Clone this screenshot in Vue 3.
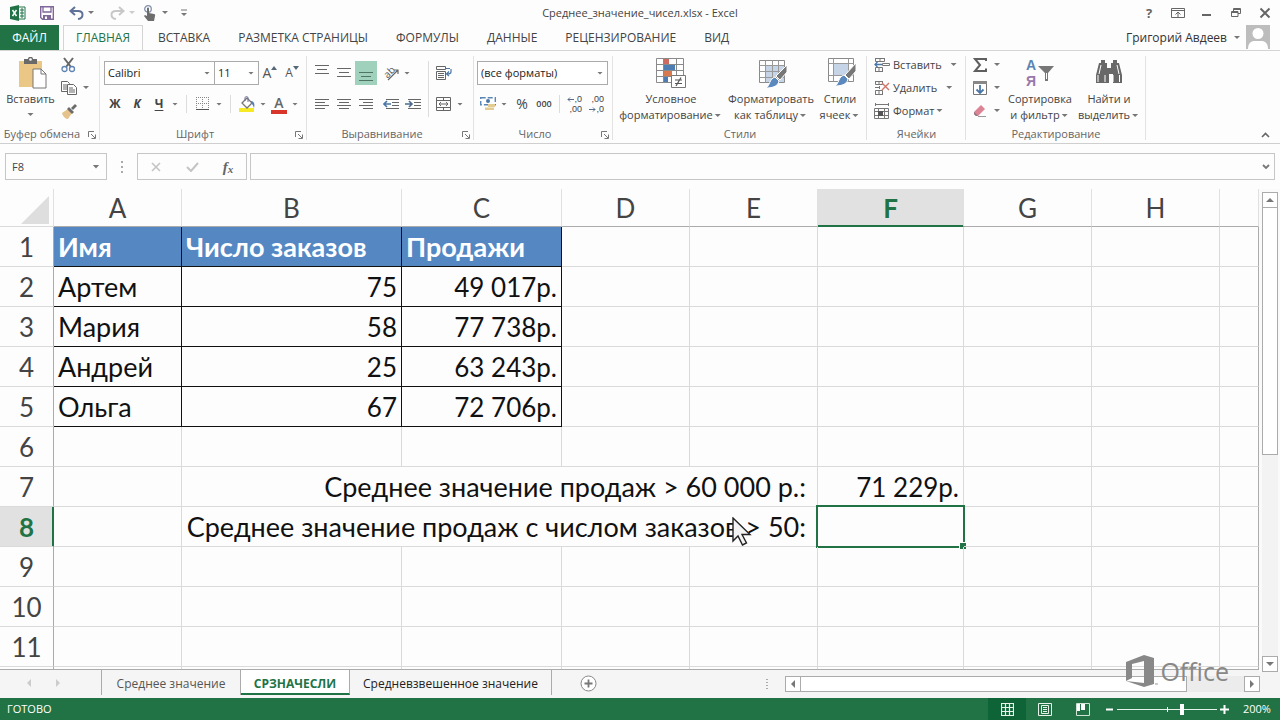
<script setup>
import { ref } from 'vue'

const menu = ['ВСТАВКА', 'РАЗМЕТКА СТРАНИЦЫ', 'ФОРМУЛЫ', 'ДАННЫЕ', 'РЕЦЕНЗИРОВАНИЕ', 'ВИД']
const columns = ['A', 'B', 'C', 'D', 'E', 'F', 'G', 'H']
const people = [
  { row: 2, name: 'Артем', orders: '75', sales: '49 017р.' },
  { row: 3, name: 'Мария', orders: '58', sales: '77 738р.' },
  { row: 4, name: 'Андрей', orders: '25', sales: '63 243р.' },
  { row: 5, name: 'Ольга', orders: '67', sales: '72 706р.' }
]
const totals = [
  { row: 7, label: 'Среднее значение продаж > 60 000 р.:', value: '71 229р.' },
  { row: 8, label: 'Среднее значение продаж с числом заказов > 50:', value: '' }
]
const zoom = ref(66)
const formula = ref('')
</script>

<template>
  <div class="app">
    <header class="titlebar">
      <div class="quick">
        <svg class="q-logo" width="16" height="16" viewBox="0 0 16 16"><path d="M9 2h6v12H9" fill="#fff" stroke="#217346" /><path d="M10 5h4M10 8h4M10 11h4M12 3v10" stroke="#217346" fill="none" /><path d="M0 2l9-2v16l-9-2z" fill="#217346" /><path d="M2.500 5l4 6M6.500 5l-4 6" stroke="#fff" stroke-width="1.500" /></svg>
        <button aria-label="Сохранить"><svg width="14" height="14" viewBox="0 0 14 14"><path d="M.7.7h12.600v12.600H2.500L.7 11.500z" fill="#fff" stroke="#80679a" stroke-width="1.400" /><path d="M3 1v5h8V1" fill="none" stroke="#80679a" stroke-width="1.300" /><path d="M3 9h8v4H3z" fill="#80679a" /><path d="M5 10.500h2V13H5z" fill="#fff" /></svg></button>
        <button aria-label="Отменить"><svg width="15" height="14" viewBox="0 0 15 14"><path d="M6 1L1.500 5 6 9M2 5h7c6 0 6 7 0 8" fill="none" stroke="#5f7297" stroke-width="2" /></svg></button>
        <i class="arr"></i>
        <button aria-label="Вернуть"><svg width="15" height="14" viewBox="0 0 15 14"><path d="M9 1l4.500 4L9 9M13 5H6c-6 0-6 7 0 8" fill="none" stroke="#c8c8c8" stroke-width="2" /></svg></button>
        <i class="arr pale"></i>
        <button class="touch" aria-label="Режим касания"><svg width="14" height="16" viewBox="0 0 14 16"><circle cx="5" cy="4" r="3.300" fill="none" stroke="#8491ad" stroke-width="1.300" /><path d="M4 3.500c0-1.500 2-1.500 2 0V8l5 1c1 0 1.500 1 1 2l-1 5H5L1 11l1-1 2 1z" fill="#6d6d6d" /></svg></button>
        <i class="arr"></i>
        <svg class="q-more" width="8" height="8" viewBox="0 0 8 8"><path d="M1 1h6" stroke="#777" /><path d="M1 4h6L4 7z" fill="#777" /></svg>
      </div>
      <div class="title">Среднее_значение_чисел.xlsx - Excel</div>
      <div class="window">
        <button class="help" aria-label="Справка">?</button>
        <button aria-label="Параметры ленты"><svg width="14" height="12" viewBox="0 0 14 12"><path d="M.5 1.500h13v9H.5zM.5 3.500h13M7 10V5M4.500 7.500L7 5l2.500 2.500" fill="none" stroke="#666" /></svg></button>
        <button aria-label="Свернуть"><svg width="12" height="12" viewBox="0 0 12 12"><path d="M1 8h9" stroke="#666" stroke-width="2" /></svg></button>
        <button aria-label="Восстановить"><svg width="12" height="12" viewBox="0 0 12 12"><path d="M3.500 4V1.500h7v5H8M1.500 4.500h6.500v5H1.500zM1.500 5.500H8M3.500 2.500h7" fill="none" stroke="#666" /></svg></button>
        <button aria-label="Закрыть"><svg width="12" height="12" viewBox="0 0 12 12"><path d="M1.500 1.500l9 9M10.500 1.500l-9 9" stroke="#666" stroke-width="2" /></svg></button>
      </div>
    </header>

    <nav class="tabs">
      <button class="file">ФАЙЛ</button>
      <button class="tab current">ГЛАВНАЯ</button>
      <button v-for="m in menu" :key="m" class="tab">{{ m }}</button>
      <button class="user">Григорий Авдеев <i class="arr"></i></button>
      <svg class="avatar" width="24" height="24" viewBox="0 0 24 24"><path d="M0 0h24v24H0z" fill="#bdbdbd" /><circle cx="12" cy="8.500" r="5.500" fill="#fff" /><path d="M2 24c0-7 4-8 7-8h6c3 0 7 1 7 8z" fill="#fff" /></svg>
    </nav>

    <section class="ribbon">
      <div class="group g-clip">
        <div class="body">
          <button class="big paste">
            <svg width="32" height="32" viewBox="0 0 32 32"><path d="M4 4h23v26H4z" fill="#ebc785" /><path d="M9 2h4c0-3 5-3 5 0h4v5H9z" fill="#696969" /><circle cx="15.500" cy="2.500" r="1.300" fill="#fff" /><path d="M18 12h8l5 5v14H18z" fill="#fff" stroke="#777" /><path d="M26 12v5h5" fill="none" stroke="#777" /></svg>
            <span>Вставить</span><i class="arr"></i>
          </button>
          <div class="stack">
            <button aria-label="Вырезать"><svg width="16" height="16" viewBox="0 0 16 16"><path d="M3 1l7 9M12 1L5 10" stroke="#666" stroke-width="2" /><circle cx="3.500" cy="12" r="2.500" fill="none" stroke="#5e83b5" stroke-width="1.300" /><circle cx="11" cy="12" r="2.500" fill="none" stroke="#5e83b5" stroke-width="1.300" /></svg></button>
            <button aria-label="Копировать"><svg width="16" height="16" viewBox="0 0 16 16"><path d="M.5 1.500h6l2 2v8h-8z" fill="#fff" stroke="#666" /><path d="M2 5h4M2 7h4M2 9h4" stroke="#666" /><path d="M6.500 4.500h6l3 3v7h-9z" fill="#fff" stroke="#666" /><path d="M8 8h4M8 10h6M8 12h6" stroke="#666" /></svg><i class="arr"></i></button>
            <button aria-label="Формат по образцу"><svg width="16" height="16" viewBox="0 0 16 16"><path d="M1 10l6-4 4 4-4 6c-2 0-5-2-6-6z" fill="#e5c38b" /><path d="M6 6l2-2 5 5-2 2zM10 5l4-4 2 2-4 4z" fill="#6b6b6b" /></svg></button>
          </div>
        </div>
        <div class="caption">Буфер обмена<svg class="launch" width="8" height="8" viewBox="0 0 8 8"><path d="M.5 6V.5H6M3 3l4 4M7.500 3.500v4h-4" fill="none" stroke="#777" /></svg></div>
      </div>

      <div class="group g-font">
        <div class="body two">
          <div class="line">
            <label class="drop wide"><select aria-label="Шрифт"><option>Calibri</option></select><i class="arr"></i></label>
            <label class="drop small"><select aria-label="Размер шрифта"><option>11</option></select><i class="arr"></i></label>
            <button class="ic grow" aria-label="Увеличить шрифт">A<svg width="6" height="4" viewBox="0 0 6 4"><path d="M0 4h6L3 0z" fill="#567" /></svg></button>
            <button class="ic grow less" aria-label="Уменьшить шрифт">A<svg width="6" height="4" viewBox="0 0 6 4"><path d="M0 0h6L3 4z" fill="#567" /></svg></button>
          </div>
          <div class="line">
            <button class="ic b">Ж</button><button class="ic b it">К</button><button class="ic b un">Ч</button><i class="arr"></i>
            <i class="sep"></i>
            <button class="ic" aria-label="Границы"><svg width="14" height="14" viewBox="0 0 14 14"><path d="M.5 0v13M6.500 0v13M12.500 0v13M0 .5h13M0 6.500h13" stroke="#888" stroke-dasharray="1 1" /><path d="M0 12.500h13" stroke="#555" /></svg></button><i class="arr"></i>
            <i class="sep"></i>
            <button class="ic" aria-label="Цвет заливки"><svg width="17" height="17" viewBox="0 0 17 17"><path d="M0 12h15v4H0z" fill="#f6ea25" /><path d="M3 7l5-5 5 5-5 5z" fill="#fff" stroke="#777" stroke-width="1.300" /><path d="M6 5V2c0-2 3-2 3 0v4" fill="none" stroke="#6c6c9a" /><path d="M12 5c3 0 4 3 3 7-1-3-2-4-3-5z" fill="#5b7fb0" /></svg></button><i class="arr"></i>
            <button class="ic letter" aria-label="Цвет текста">А</button><i class="arr"></i>
          </div>
        </div>
        <div class="caption">Шрифт<svg class="launch" width="8" height="8" viewBox="0 0 8 8"><path d="M.5 6V.5H6M3 3l4 4M7.500 3.500v4h-4" fill="none" stroke="#777" /></svg></div>
      </div>

      <div class="group g-align">
        <div class="body sides">
          <div class="two">
            <div class="line">
              <button class="ic" aria-label="По верхнему краю"><svg width="14" height="18" viewBox="0 0 14 18"><path d="M0 1.500h14M2 5.500h10M0 9.500h14" stroke="#666" /></svg></button>
              <button class="ic" aria-label="По середине"><svg width="14" height="18" viewBox="0 0 14 18"><path d="M0 4.500h14M2 8.500h10M0 12.500h14" stroke="#666" /></svg></button>
              <button class="ic on" aria-label="По нижнему краю"><svg width="14" height="18" viewBox="0 0 14 18"><path d="M0 8.500h14M2 12.500h10M0 16.500h14" stroke="#4f7566" /></svg></button>
              <button class="ic gap" aria-label="Ориентация"><svg class="turn" width="18" height="18" viewBox="0 0 18 18"><text x="2" y="12" font-size="10" transform="rotate(-45 7 9)" fill="#555">ab</text><path d="M6 16L16 6M12 6h4v4" fill="none" stroke="#666" stroke-width="1.200" /></svg></button><i class="arr"></i>
            </div>
            <div class="line">
              <button class="ic" aria-label="По левому краю"><svg width="14" height="14" viewBox="0 0 14 14"><path d="M0 2.500h14M0 5.500h10M0 8.500h14M0 11.500h10" stroke="#666" /></svg></button>
              <button class="ic" aria-label="По центру"><svg width="14" height="14" viewBox="0 0 14 14"><path d="M0 2.500h14M2 5.500h10M0 8.500h14M2 11.500h10" stroke="#666" /></svg></button>
              <button class="ic" aria-label="По правому краю"><svg width="14" height="14" viewBox="0 0 14 14"><path d="M0 2.500h14M4 5.500h10M0 8.500h14M4 11.500h10" stroke="#666" /></svg></button>
              <button class="ic gap" aria-label="Уменьшить отступ"><svg width="16" height="14" viewBox="0 0 16 14"><path d="M3 2.500h13M9 5.500h7M9 8.500h7M3 11.500h13" stroke="#666" /><path d="M8 7H1M4 4L1 7l3 3" fill="none" stroke="#4a76a8" stroke-width="1.600" /></svg></button>
              <button class="ic" aria-label="Увеличить отступ"><svg width="16" height="14" viewBox="0 0 16 14"><path d="M3 2.500h13M9 5.500h7M9 8.500h7M3 11.500h13" stroke="#666" /><path d="M0 7h7M4 4l3 3-3 3" fill="none" stroke="#4a6a90" stroke-width="1.600" /></svg></button>
            </div>
          </div>
          <i class="sep tall"></i>
          <div class="two">
            <div class="line"><button class="ic" aria-label="Перенос текста"><svg width="16" height="16" viewBox="0 0 16 16"><path d="M.5 1.500h9v3h-9zM.5 6.500h9v8h-9zM2 8.500h6M2 10.500h6M2 12.500h6" fill="none" stroke="#666" /><path d="M10 3.500h4M15 4v3c0 2-3 2-4 2M13 6.500L10.500 9l2.500 2" fill="none" stroke="#4a76a8" stroke-width="1.200" /></svg></button></div>
            <div class="line"><button class="ic" aria-label="Объединить"><svg width="16" height="16" viewBox="0 0 16 16"><path d="M.5 1.500h14v13H.5zM.5 4.500h14M.5 11.500h14M7.500 1v3.500M7.500 11.500V15" fill="none" stroke="#666" /><path d="M3 8h9M5 6L3 8l2 2M10 6l2 2-2 2" fill="none" stroke="#666" /></svg></button><i class="arr"></i></div>
          </div>
        </div>
        <div class="caption">Выравнивание<svg class="launch" width="8" height="8" viewBox="0 0 8 8"><path d="M.5 6V.5H6M3 3l4 4M7.500 3.500v4h-4" fill="none" stroke="#777" /></svg></div>
      </div>

      <div class="group g-num">
        <div class="body two">
          <div class="line"><label class="drop full"><select aria-label="Числовой формат"><option>(все форматы)</option></select><i class="arr"></i></label></div>
          <div class="line">
            <button class="ic" aria-label="Финансовый формат"><svg width="17" height="16" viewBox="0 0 17 16"><path d="M.7 1.700h14.600v7H.7z" fill="#fff" stroke="#5b86b8" stroke-width="1.400" stroke-dasharray="5 2" /><circle cx="8" cy="5" r="2" fill="#4a76a8" /><path d="M8 8h7v3H8zM5 11.500h9V14H5z" fill="#e4cb91" /></svg></button><i class="arr"></i>
            <button class="ic pct">%</button><button class="ic zeros">000</button>
            <i class="sep slim"></i>
            <button class="ic dec" aria-label="Увеличить разрядность"><span><svg width="7" height="5" viewBox="0 0 7 5"><path d="M7 2.500H1M3 .5l-2 2 2 2" fill="none" stroke="#5a6e8c" /></svg>,0</span><span>,00</span></button>
            <button class="ic dec" aria-label="Уменьшить разрядность"><span>,00</span><span><svg width="7" height="5" viewBox="0 0 7 5"><path d="M0 2.500h6M4 .5l2 2-2 2" fill="none" stroke="#5a6e8c" /></svg>,0</span></button>
          </div>
        </div>
        <div class="caption">Число<svg class="launch" width="8" height="8" viewBox="0 0 8 8"><path d="M.5 6V.5H6M3 3l4 4M7.500 3.500v4h-4" fill="none" stroke="#777" /></svg></div>
      </div>

      <div class="group g-style">
        <div class="body">
          <button class="big w1">
            <svg width="32" height="32" viewBox="0 0 32 32"><path d="M1.500 1.500h27v24h-27zM1.500 7.500h27M1.500 13.500h27M1.500 19.500h27M8.500 1.500v24M21.500 1.500v24" fill="#fff" stroke="#8a8a8a" /><path d="M9 2h5v5H9z" fill="#ce6a62" /><path d="M9 8h11v5H9z" fill="#4e7db4" /><path d="M9 14h8v5H9z" fill="#d77a4f" /><path d="M9 20h4v5H9z" fill="#4e7db4" /><path d="M16.500 18.500h14v12h-14z" fill="#fff" stroke="#777" /><path d="M20 23h7M20 26.500h7M26 20.500l-5 8.500" stroke="#555" stroke-width="1.200" /></svg>
            <span>Условное</span><span>форматирование<i class="arr"></i></span>
          </button>
          <button class="big w2">
            <svg width="32" height="32" viewBox="0 0 32 32"><path d="M4.500 3.500h25v22h-25z" fill="#fff" stroke="#8a8a8a" /><path d="M11 9h18v16H11z" fill="#c5d4e6" /><path d="M4.500 8.500h25M4.500 14.500h25M4.500 20.500h25M10.500 3.500v22M17.500 3.500v22M23.500 3.500v22" stroke="#999" /><path d="M32 8v7l-7 8-4-4z" fill="#777" stroke="#fff" /><path d="M20 20l4 4c-1 6-8 7-13 7 4-2 3-9 9-11z" fill="#5b89bd" stroke="#fff" /></svg>
            <span>Форматировать</span><span>как таблицу<i class="arr"></i></span>
          </button>
          <button class="big w3">
            <svg width="32" height="32" viewBox="0 0 32 32"><path d="M4.500 1.500h25v23h-25z" fill="#fff" stroke="#8a8a8a" /><path d="M4.500 6.500h25M4.500 18.500h25M9.500 1.500v23M24.500 1.500v23" stroke="#999" /><path d="M10 7h14v11H10z" fill="#c5d4e6" /><path d="M32 6v8l-7 8-4-4z" fill="#777" stroke="#fff" /><path d="M20 18l4 4c-1 6-8 7-13 7 4-2 3-9 9-11z" fill="#5b89bd" stroke="#fff" /></svg>
            <span>Стили</span><span>ячеек<i class="arr"></i></span>
          </button>
        </div>
        <div class="caption">Стили</div>
      </div>

      <div class="group g-cells">
        <div class="body">
          <div class="stack">
            <button><svg width="16" height="16" viewBox="0 0 16 16"><path d="M1.500 1V4.500h9V1M1.500 1.500h9M6 1v3.500M1.500 15v-4.500h7V15M1.500 14.500h7M5 10.500v4M8.500 6.500h7v2h-7z" fill="none" stroke="#777" /><path d="M8 7.500H1M3.500 5L1 7.500 3.500 10" fill="none" stroke="#4a76a8" stroke-width="1.300" /></svg><span>Вставить</span><i class="arr far"></i></button>
            <button><svg width="16" height="16" viewBox="0 0 16 16"><path d="M1.500 1V4.500h7V1M1.500 1.500h7M5 1v3.500M1.500 15v-4.500h7V15M1.500 14.500h7M5 10.500v4M1 7.500h4M5.500 6v3" fill="none" stroke="#777" /><path d="M8 3l7 7M15 3l-7 7" stroke="#cf7566" stroke-width="1.400" /></svg><span>Удалить</span><i class="arr far"></i></button>
            <button><svg width="16" height="16" viewBox="0 0 16 16"><path d="M1.500 0v3M14.500 0v3M1.500 1.500h13" stroke="#777" /><path d="M.5 5.500h14v10H.5zM.5 8.500h14M.5 12.500h14M4.500 5v11M10.500 5v11" fill="none" stroke="#777" /><path d="M4 8h5v5H4z" fill="#555" /></svg><span>Формат</span><i class="arr"></i></button>
          </div>
        </div>
        <div class="caption">Ячейки</div>
      </div>

      <div class="group g-edit">
        <div class="body">
          <div class="stack">
            <button aria-label="Автосумма"><svg width="16" height="16" viewBox="0 0 16 16"><path d="M14 4V2H3l5 6-5 6h11v-2.500" fill="none" stroke="#5f5f5f" stroke-width="2" /></svg><i class="arr"></i></button>
            <button aria-label="Заполнить"><svg width="16" height="16" viewBox="0 0 16 16"><path d="M1.500 1.500h13v13h-13z" fill="#fff" stroke="#777" /><path d="M1 1h14v3H1z" fill="#888" /><path d="M8 5v8M4.500 9.500L8 13l3.500-3.500" fill="none" stroke="#4a76a8" stroke-width="1.800" /></svg><i class="arr"></i></button>
            <button aria-label="Очистить"><svg width="16" height="16" viewBox="0 0 16 16"><path d="M2 9l7-7 4 4-7 7H4l-2-2z" fill="#dc8394" /><path d="M2 9l4 4H4l-2-2z" fill="#8c7580" /><path d="M6 13.500h8" stroke="#999" /></svg><i class="arr"></i></button>
          </div>
          <button class="big w4">
            <span class="sort"><span><b>А</b><b class="ya">Я</b></span><svg width="16" height="17" viewBox="0 0 16 17"><path d="M0 1h16l-6 7v8H7V8z" fill="#777" /><path d="M8 8h1v6H8z" fill="#fff" /></svg></span>
            <span>Сортировка</span><span>и фильтр<i class="arr"></i></span>
          </button>
          <button class="big w5">
            <svg width="32" height="32" viewBox="0 0 32 32"><path d="M8 3h4v3h2v5h4V6h2V3h4v3h2l3 12v8h-9v-9h-4v9H3v-8L6 6h2z" fill="#686868" /><path d="M5 18v7M26.500 18v7M8 8L6 17M24 8l2 9M12 18v7M20 18v7" stroke="#fff" /></svg>
            <span>Найти и</span><span>выделить<i class="arr"></i></span>
          </button>
        </div>
        <div class="caption">Редактирование</div>
      </div>
      <button class="collapse" aria-label="Свернуть ленту"><svg width="9" height="6" viewBox="0 0 9 6"><path d="M1 5l3.500-3.500L8 5" fill="none" stroke="#666" stroke-width="1.600" /></svg></button>
    </section>

    <section class="formula">
      <label class="namebox"><select aria-label="Имя ячейки"><option>F8</option></select><i class="arr"></i></label>
      <svg class="dots" width="3" height="14" viewBox="0 0 3 14"><path d="M0 1h2v2H0zM0 6h2v2H0zM0 11h2v2H0z" fill="#aaa" /></svg>
      <div class="fx">
        <button aria-label="Отмена"><svg width="10" height="10" viewBox="0 0 10 10"><path d="M1 1l8 8M9 1L1 9" stroke="#c4c4c4" stroke-width="1.600" /></svg></button>
        <button aria-label="Ввод"><svg width="13" height="10" viewBox="0 0 13 10"><path d="M1 5l4 4 7-8" fill="none" stroke="#c4c4c4" stroke-width="2" /></svg></button>
        <button class="fn" aria-label="Вставить функцию"><i>f</i><i class="x">x</i></button>
      </div>
      <div class="entry"><input v-model="formula" aria-label="Строка формул" /><svg width="8" height="6" viewBox="0 0 8 6"><path d="M1 1l3 3 3-3" fill="none" stroke="#777" stroke-width="1.800" /></svg></div>
    </section>

    <main class="sheet">
      <div class="cells">
        <table>
          <colgroup><col class="c0" /><col v-for="c in columns" :key="c" :class="'c' + c" /><col /></colgroup>
          <thead>
            <tr><th class="corner"><svg width="28" height="28" viewBox="0 0 28 28"><path d="M28 0v28H0z" fill="#dedede" /></svg></th><th v-for="c in columns" :key="c" :class="{ active: c === 'F' }">{{ c }}</th><th></th></tr>
          </thead>
          <tbody>
            <tr class="head"><th>1</th><td>Имя</td><td>Число заказов</td><td>Продажи</td><td v-for="n in 6" :key="n" class="plain"></td></tr>
            <tr v-for="p in people" :key="p.row" class="data"><th>{{ p.row }}</th><td>{{ p.name }}</td><td class="num">{{ p.orders }}</td><td class="num">{{ p.sales }}</td><td v-for="n in 6" :key="n" class="plain"></td></tr>
            <tr><th>6</th><td v-for="n in 9" :key="n"></td></tr>
            <tr v-for="t in totals" :key="t.row"><th :class="{ active: t.row === 8 }">{{ t.row }}</th><td></td><td colspan="4" class="label">{{ t.label }}</td><td class="num" :class="{ selected: t.row === 8 }">{{ t.value }}</td><td v-for="n in 3" :key="n"></td></tr>
            <tr v-for="r in [9, 10, 11]" :key="r"><th>{{ r }}</th><td v-for="n in 9" :key="n"></td></tr>
            <tr><th></th><td v-for="n in 9" :key="n"></td></tr>
          </tbody>
        </table>
      </div>
      <div class="vscroll">
        <button aria-label="Вверх"><i class="tri up"></i></button>
        <div class="thumb"></div><div class="track"></div>
        <button aria-label="Вниз"><i class="tri down"></i></button>
      </div>
      <svg class="pointer" width="20" height="30" viewBox="0 0 20 30"><path d="M1 1v23l5-5 4.500 9 4-2-4.500-8.500h8z" fill="#f4f4f4" stroke="#222" stroke-width="1.400" /></svg>
    </main>

    <footer class="sheetbar">
      <div class="arrows"><i class="tri left"></i><i class="tri right"></i></div>
      <button class="stab first">Среднее значение</button>
      <button class="stab sel">СРЗНАЧЕСЛИ</button>
      <button class="stab dark">Средневзвешенное значение</button>
      <button class="add" aria-label="Новый лист"><svg width="17" height="17" viewBox="0 0 17 17"><circle cx="8.500" cy="8.500" r="7.500" fill="#fff" stroke="#888" /><path d="M8.500 4.500v8M4.500 8.500h8" stroke="#777" stroke-width="1.800" /></svg></button>
      <svg class="dots grip" width="3" height="14" viewBox="0 0 3 14"><path d="M0 2h2v1H0zM0 5h2v1H0zM0 8h2v1H0zM0 11h2v1H0z" fill="#aaa" /></svg>
      <div class="hscroll">
        <button aria-label="Влево"><i class="tri left"></i></button>
        <div class="thumb"></div><div class="track"></div>
        <button aria-label="Вправо"><i class="tri right"></i></button>
      </div>
      <div class="brand">
        <svg width="34" height="32" viewBox="0 0 34 32"><path d="M0 7L18 0l10 3v26l-10 3L0 26l18 2V6L6 9v14l-6 3z" fill="#888" /><path d="M29 29h3" stroke="#999" /></svg><span>Office</span>
      </div>
    </footer>

    <footer class="status">
      <span class="ready">ГОТОВО</span>
      <button class="view now" aria-label="Обычный"><svg width="13" height="13" viewBox="0 0 13 13"><path d="M.5.5h12v12H.5zM4.500.5v12M8.500.5v12M.5 4.500h12M.5 8.500h12" fill="none" stroke="#e6f2ea" stroke-width="1.200" /></svg></button>
      <button class="view" aria-label="Разметка страницы"><svg width="14" height="13" viewBox="0 0 14 13"><path d="M.5.5h13v12H.5zM3.500 2.500h7v8h-7zM5 4.500h4M5 6.500h4M5 8.500h4" fill="none" stroke="#e6f2ea" /></svg></button>
      <button class="view" aria-label="Страничный"><svg width="14" height="13" viewBox="0 0 14 13"><path d="M.5.5h13v12H.5z" fill="none" stroke="#cfe3d7" /><path d="M1 1h3v7H1zM5 1h4v6H5z" fill="#fff" /></svg></button>
      <button class="sign" aria-label="Уменьшить"><svg width="7" height="7" viewBox="0 0 7 7"><path d="M0 3.500h7" stroke="#fff" stroke-width="2" /></svg></button>
      <div class="slide"><input v-model="zoom" type="range" min="0" max="100" aria-label="Масштаб" /></div>
      <button class="sign" aria-label="Увеличить"><svg width="9" height="9" viewBox="0 0 9 9"><path d="M0 4.500h9M4.500 0v9" stroke="#fff" stroke-width="2" /></svg></button>
      <span class="pc">200%</span>
    </footer>
  </div>
</template>

<style>
html, body { margin: 0; background: #fdfdfd; }
</style>

<style scoped>
* { box-sizing: border-box; }
.app { height: 100vh; display: flex; flex-direction: column; overflow: hidden; font-family: "Open Sans", "Noto Sans", sans-serif; font-size: 12px; line-height: 16px; color: #444; background: #fdfdfd; }
button, select, input { font: inherit; color: inherit; border: 0; background: none; padding: 0; margin: 0; border-radius: 0; outline: 0; }
button { display: flex; align-items: center; justify-content: center; white-space: nowrap; }
svg { flex: none; display: block; }
.arr { flex: none; width: 10px; height: 3px; background: #777; clip-path: polygon(20% 0, 80% 0, 50% 100%); }
.arr.pale { background: #ccc; }

.titlebar { flex: 0 0 25px; display: grid; grid-template-columns: 1fr auto 1fr; align-items: center; }
.quick { display: flex; align-items: center; padding-left: 10px; height: 22px; }
.quick button { width: 20px; }
.q-logo { margin-right: 11px; }
.quick button + button { margin-left: 9px; }
.quick .arr + button { margin-left: 11px; }
.quick .arr + .touch { margin-left: 3px; }
.q-more { margin-left: 10px; }
.title { font-size: 11px; }
.window { display: flex; justify-content: flex-end; align-items: center; gap: 9px; padding-right: 5px; height: 22px; }
.window button { width: 20px; height: 20px; }
.help { font-weight: 700; font-size: 13px; color: #666; }

.tabs { flex: 0 0 25px; display: flex; border-bottom: 1px solid #d4d4d4; }
.file { width: 59px; background: #217346; color: #fff; margin-right: 4px; }
.tab { padding: 0 14px; }
.tab.current { height: 25px; width: 80px; padding: 0; background: #fdfdfd; border: 1px solid #d4d4d4; border-bottom: 0; color: #217346; margin-right: 1px; }
.user { margin-left: auto; gap: 5px; color: #333; }
.avatar { margin: 0 10px 0 4px; }

.ribbon { flex: 0 0 93px; display: flex; border-bottom: 1px solid #cfcfcf; }
.group { flex: none; display: flex; flex-direction: column; position: relative; font-size: 11px; }
.group::after { content: ""; position: absolute; right: 0; top: 5px; bottom: 3px; width: 1px; background: #e2e2e2; }
.g-clip { width: 100px; }
.g-font { width: 207px; }
.g-align { width: 167px; }
.g-num { width: 139px; }
.g-style { width: 254px; }
.g-cells { width: 99px; }
.g-edit { width: 180px; }
.body { flex: 1; display: flex; padding-top: 2px; }
.caption { height: 17px; text-align: center; color: #666; }
.g-clip .caption { padding-right: 16px; }
.g-font .caption, .g-align .caption, .g-num .caption { padding-right: 17px; }
.launch { position: absolute; right: 4px; bottom: 4px; }
.big { flex-direction: column; justify-content: flex-start; padding-top: 4px; line-height: 16px; }
.big > svg { margin-bottom: 2px; }
.big > span { display: flex; align-items: center; }
.big .arr { margin-top: 1px; }
.paste { width: 61px; }
.paste > .arr { margin-top: 6px; }
.stack { display: grid; grid-template-rows: repeat(3, 23px); }
.stack button { justify-content: flex-start; }
.g-clip .stack .arr { margin-left: 4px; }
.g-cells .stack { padding-left: 7px; }
.g-cells .stack span { margin-left: 3px; }
.g-cells .stack .far { margin-left: 7px; }
.g-edit .stack { padding-left: 6px; width: 38px; }
.g-edit .stack .arr { margin-left: 4px; }
.w1 { width: 116px; }
.w2 { width: 84px; }
.w3 { width: 54px; }
.w4 { width: 72px; }
.w5 { width: 66px; }
.big .sort { height: 32px; margin-bottom: 2px; gap: 2px; }
.sort > span { display: grid; }
.sort b { font-family: "Liberation Sans", sans-serif; font-size: 14px; line-height: 16px; color: #5b84b1; font-weight: 700; }
.sort .ya { color: #9878ad; }

.two { display: flex; flex-direction: column; gap: 7px; }
.body.two, .body.sides { padding-top: 10px; }
.g-font .body, .g-align .body { padding-left: 4px; }
.g-num .body { padding-left: 3px; }
.line { display: flex; align-items: center; height: 24px; }
.ic { flex: none; width: 22px; height: 24px; }
.ic.gap { margin-left: 3px; }
.ic.on { background: #9fd1bd; }
.turn { overflow: visible; }
.b { font-weight: 700; font-size: 12px; }
.it { font-style: italic; }
.un { text-decoration: underline; text-underline-offset: 2px; }
.grow { font-size: 14px; color: #555; }
.grow svg { margin-bottom: 10px; }
.less { font-size: 12px; }
.letter { font-size: 14px; font-weight: 600; line-height: 13px; color: #666; background: linear-gradient(#d8352b, #d8352b) no-repeat 3px 18px / 16px 4px; padding-bottom: 4px; }
.pct { font-size: 14px; margin-left: 2px; }
.zeros { font-size: 9px; font-weight: 600; }
.dec { flex-direction: column; font-family: "Liberation Sans", sans-serif; font-size: 9px; line-height: 10px; align-items: flex-end; padding-right: 3px; }
.dec span { display: flex; align-items: center; }
.sep { flex: none; width: 12px; height: 18px; background: linear-gradient(#dcdcdc, #dcdcdc) no-repeat center / 1px 100%; }
.sep.slim { width: 8px; }
.sep.tall { width: 9px; height: 56px; }
.drop { display: flex; align-items: center; height: 24px; border: 1px solid #ababab; background: #fff; color: #222; }
.drop select { flex: 1; min-width: 0; height: 22px; padding-left: 3px; appearance: none; }
.drop .arr { margin-right: 2px; }
.drop.wide { width: 111px; }
.drop.small { width: 44px; border-left: 0; }
.drop.full { width: 131px; }
.collapse { align-self: flex-end; margin: 0 10px 5px auto; }

.formula { flex: 0 0 45px; display: flex; align-items: center; padding: 0 5px; font-size: 11px; }
.namebox, .fx, .entry { display: flex; align-items: center; height: 27px; border: 1px solid #c6c6c6; background: #fdfdfd; }
.namebox { width: 102px; }
.namebox select { flex: 1; height: 24px; padding-left: 6px; appearance: none; }
.namebox .arr { width: 12px; height: 4px; margin-right: 4px; }
.dots { margin: 0 13px 0 14px; }
.fx { width: 110px; margin-right: 3px; }
.fx button { flex: 1; height: 24px; }
.fn { font-family: "Liberation Serif", serif; font-size: 15px; font-weight: 700; color: #666; }
.fn .x { font-size: 11px; margin-top: 4px; }
.entry { flex: 1; padding-right: 4px; }
.entry input { flex: 1; min-width: 0; height: 24px; padding: 0 6px; }

.sheet { flex: 1; min-height: 0; display: flex; position: relative; }
.cells { flex: 1; min-width: 0; overflow: hidden; border-bottom: 1px solid #ababab; }
table { width: 100%; table-layout: fixed; border-collapse: separate; border-spacing: 0; font-family: Lato, "Open Sans", sans-serif; font-size: 27px; line-height: 38px; color: #111; }
.c0 { width: 54px; }
.cA, .cD, .cE, .cG, .cH { width: 128px; }
.cB { width: 220px; }
.cC { width: 160px; }
.cF { width: 146px; }
th, td { height: 40px; padding: 0 4px; border: solid #dadada; border-width: 0 1px 1px 0; white-space: nowrap; position: relative; overflow: visible; }
th { padding: 0; font-size: 26px; font-weight: 400; color: #444; text-align: center; }
tbody th { border-right-color: #ababab; }
thead th { height: 38px; line-height: 36px; border-bottom-color: #ababab; border-right-color: #e0e0e0; }
thead th.corner { border-bottom-color: #dadada; }
.corner svg { margin: 4px 0 0 21px; }
th.active { background: #e1e1e1; color: #217346; font-weight: 700; }
thead th.active { border-bottom-color: #217346; box-shadow: inset 0 -1px #217346; }
tbody th.active { border-right-color: #217346; box-shadow: inset -1px 0 #217346; }
td:last-child { border-right-color: #ababab; }
.num { text-align: right; font-size: 26px; }
.label { text-align: right; padding-right: 11px; }
.head td:not(.plain) { background: #5588c3; color: #fff; font-weight: 700; border-color: #111; }
.data td:not(.plain) { border-color: #111; }
.selected::before { content: ""; position: absolute; inset: -2px; border: 2px solid #217346; }
.selected::after { content: ""; position: absolute; right: -3px; bottom: -3px; width: 6px; height: 6px; background: #217346; border: solid #fdfdfd; border-width: 1px 0 0 1px; }
.pointer { position: absolute; left: 732px; top: 328px; }

.vscroll { width: 21px; padding: 3px 3px 0; display: flex; flex-direction: column; background: #fafafa; margin-bottom: -2px; z-index: 1; }
.vscroll button, .hscroll button { flex: none; width: 16px; height: 16px; border: 1px solid #ababab; background: #fff; }
.thumb { background: #fff; border: 1px solid #ababab; }
.vscroll .thumb { flex: 55; margin-top: -1px; }
.vscroll .thumb, .vscroll .track { width: 16px; }
.vscroll .track { flex: 45; background: #f3f3f3; }
.tri { width: 8px; height: 8px; background: #777; }
.up { height: 4px; clip-path: polygon(0 100%, 50% 0, 100% 100%); }
.down { height: 4px; clip-path: polygon(0 0, 50% 100%, 100% 0); }
.left { width: 4px; clip-path: polygon(100% 0, 0 50%, 100% 100%); }
.right { width: 4px; clip-path: polygon(0 0, 100% 50%, 0 100%); }

.sheetbar { flex: 0 0 28px; display: flex; background: #f5f5f5; position: relative; align-items: flex-start; }
.arrows { width: 101px; display: flex; gap: 25px; padding: 9px 0 0 27px; }
.arrows .tri { background: #ccc; }
.stab { height: 25px; padding-top: 2px; font-size: 12px; color: #555; }
.first { width: 140px; border-left: 1px solid #ababab; border-right: 1px solid #ababab; }
.sel { width: 109px; padding-top: 4px; background: #fff; color: #217346; font-weight: 700; border-bottom: 2px solid #217346; border-right: 1px solid #ababab; }
.dark { width: 202px; color: #222; border-right: 1px solid #ababab; }
.add { margin: 5px 0 0 28px; }
.grip { margin: 7px 16px 0 auto; }
.hscroll { width: 475px; height: 16px; margin: 6px 20px 0 0; display: flex; }
.hscroll .thumb { flex: 87; margin-left: -1px; }
.hscroll .track { flex: 13; background: #ececec; }
.brand { position: absolute; right: 51px; bottom: 11px; display: flex; align-items: center; color: #888; font-size: 25px; line-height: 32px; font-weight: 400; }

.status { flex: 0 0 22px; display: flex; align-items: center; background: #217346; color: #fff; font-size: 11px; }
.ready { padding-left: 7px; margin-right: auto; }
.view { width: 38px; height: 22px; }
.view.now { background: #0e6437; }
.sign { width: 15px; height: 22px; }
.slide { width: 100px; margin: 0; display: flex; align-items: center; height: 22px; background: linear-gradient(#fff, #fff) no-repeat 50% 50% / 1px 5px, linear-gradient(#e6f2ea, #e6f2ea) no-repeat center / 100% 1px; }
.slide input { width: 100%; height: 12px; appearance: none; }
.slide input::-webkit-slider-thumb { appearance: none; width: 4px; height: 11px; background: #fff; }
.pc { width: 48px; padding-left: 11px; }
</style>
